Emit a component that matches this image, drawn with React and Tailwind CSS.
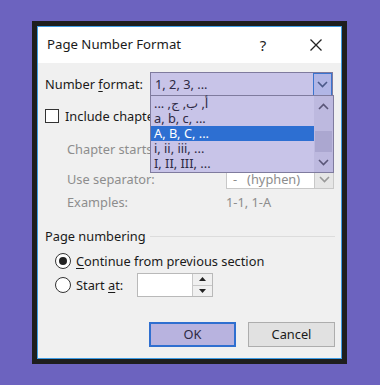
import React from "react";

const font = { fontFamily: '"Noto Sans", "Open Sans", "DejaVu Sans", sans-serif' };

function Chevron({ className = "", up = false, color = "#5a5678" }) {
  return (
    <svg width="11" height="7" viewBox="0 0 11 7" className={className}>
      <polyline
        points={up ? "1,6 5.5,1.5 10,6" : "1,1 5.5,5.5 10,1"}
        fill="none"
        stroke={color}
        strokeWidth="1.6"
      />
    </svg>
  );
}

function Radio({ checked }) {
  return (
    <div className="w-[16px] h-[16px] rounded-full border border-[#333] bg-white flex items-center justify-center shrink-0">
      {checked && <div className="w-[8px] h-[8px] rounded-full bg-[#222]" />}
    </div>
  );
}

export default function App() {
  const items = [
    { t: "أ, ب, ج, ...", rtl: true },
    { t: "a, b, c, ..." },
    { t: "A, B, C, ...", sel: true },
    { t: "i, ii, iii, ..." },
    { t: "I, II, III, ..." },
  ];
  return (
    <div className="w-[380px] h-[385px] bg-[#6c63bf] overflow-hidden pt-[21px] pl-[32px]" style={font}>
      <div className="w-[315px] h-[343px] border-[5px] border-[#1e1e1e] bg-[#1e1e1e]">
        <div className="w-full h-full border border-[#3f9de4] flex flex-col">
          {/* Title bar */}
          <div className="h-[36px] bg-white flex items-center pl-[9px] pr-[19px] shrink-0">
            <div className="text-[13.2px] text-[#1a1a1a] flex-1 leading-none whitespace-nowrap">Page Number Format</div>
            <div className="text-[15px] text-[#222] w-[12px] text-center leading-none mr-[41px]">?</div>
            <svg width="12" height="12" viewBox="0 0 12 12">
              <path d="M0.5 0.5 L11.5 11.5 M11.5 0.5 L0.5 11.5" stroke="#222" strokeWidth="1.3" />
            </svg>
          </div>
          {/* Body */}
          <div className="flex-1 bg-[#f0f0f0] relative pl-[6px] pr-[6px] pt-[9px] text-[12.8px] text-[#1a1a1a] whitespace-nowrap">
            {/* Number format row */}
            <div className="flex items-center h-[24px]">
              <div className="w-[106px] leading-none pl-[1px]">
                Number <span className="underline underline-offset-2">f</span>ormat:
              </div>
              <div className="w-[183px] h-[24px] bg-[#c8c4e8] border border-[#7f7b9e] flex items-center pl-[4px]">
                <span className="flex-1 text-[#2e2a44] leading-none">1, 2, 3, ...</span>
                <div className="w-[19px] h-[23px] bg-[#b1b6e6] border border-[#3a74cf] flex items-center justify-center">
                  <Chevron color="#4b5a8a" />
                </div>
              </div>
            </div>
            {/* Include chapter number */}
            <div className="flex items-center h-[15px] mt-[12px]">
              <div className="w-[14px] h-[14px] border border-[#333] bg-white ml-[1px] shrink-0" />
              <div className="ml-[6px] w-[86px] overflow-hidden leading-[16px]">
                Include chapter <span className="underline underline-offset-2">n</span>umber
              </div>
            </div>
            {/* Chapter starts with style */}
            <div className="flex items-center h-[19px] mt-[16px] pl-[23px] text-[#8d8d8d]">
              <div className="w-[84px] overflow-hidden leading-[16px]">Chapter starts with style:</div>
            </div>
            {/* Use separator */}
            <div className="flex items-center h-[19px] mt-[12px] pl-[23px] text-[#8d8d8d]">
              <div className="w-[159px] leading-none">Use separator:</div>
              <div className="w-[108px] h-[19px] bg-white border border-[#c8c8c8] flex items-center">
                <span className="flex-1 pl-[6px] leading-none">-&nbsp;&nbsp;&nbsp;(hyphen)</span>
                <div className="w-[19px] h-[17px] bg-[#e6e6e6] border-l border-[#c8c8c8] flex items-center justify-center">
                  <Chevron color="#999" />
                </div>
              </div>
            </div>
            {/* Examples */}
            <div className="flex items-center h-[16px] mt-[5px] pl-[23px] text-[#8d8d8d]">
              <div className="w-[159px] leading-none">Examples:</div>
              <div className="leading-none">1-1, 1-A</div>
            </div>
            {/* Page numbering */}
            <div className="flex items-center h-[16px] mt-[18px] pl-[1px]">
              <div className="w-[105px] leading-none">Page numbering</div>
              <div className="flex-1 h-px bg-[#dcdcdc]" />
            </div>
            {/* Continue */}
            <div className="flex items-center h-[16px] mt-[9px] pl-[11px]">
              <Radio checked />
              <div className="ml-[5px] leading-none">
                <span className="underline underline-offset-2">C</span>ontinue from previous section
              </div>
            </div>
            {/* Start at */}
            <div className="flex items-center h-[24px] mt-[4px] pl-[11px]">
              <Radio />
              <div className="ml-[5px] w-[61px] leading-none">
                Start <span className="underline underline-offset-2">a</span>t:
              </div>
              <div className="w-[76px] h-[24px] bg-white border border-[#b9b9b9] flex justify-end">
                <div className="w-[20px] h-full border-l border-[#c8c8c8] bg-[#f0f0f0] flex flex-col">
                  <div className="flex-1 flex items-center justify-center border-b border-[#c8c8c8]">
                    <svg width="7" height="4" viewBox="0 0 7 4"><polygon points="0,4 3.5,0 7,4" fill="#222" /></svg>
                  </div>
                  <div className="flex-1 flex items-center justify-center">
                    <svg width="7" height="4" viewBox="0 0 7 4"><polygon points="0,0 3.5,4 7,0" fill="#222" /></svg>
                  </div>
                </div>
              </div>
            </div>
            {/* Buttons */}
            <div className="flex justify-end gap-[12px] mt-[25px]">
              <div className="w-[87px] h-[25px] bg-[#b8b3df] border-2 border-[#2f6fd0] flex items-center justify-center text-[#2e2a44] leading-none">
                OK
              </div>
              <div className="w-[87px] h-[25px] bg-[#e1e1e1] border border-[#adadad] flex items-center justify-center leading-none">
                Cancel
              </div>
            </div>

            {/* Dropdown list overlay */}
            <div className="absolute left-[112px] top-[32px] w-[184px] h-[78px] bg-[#c8c4e8] border border-[#7f7b9e] flex text-[#2e2a44]">
              <div className="flex-1 flex flex-col">
                {items.map((it, i) => (
                  <div
                    key={i}
                    className={
                      "h-[15px] flex items-center pl-[3px] leading-none " +
                      (it.sel ? "bg-[#2d6fd2] text-white" : "")
                    }
                  >
                    {it.rtl ? <span dir="rtl">{it.t}</span> : it.t}
                  </div>
                ))}
              </div>
              <div className="w-[19px] bg-[#bdb9df] flex flex-col items-center">
                <div className="h-[20px] flex items-center justify-center">
                  <Chevron up />
                </div>
                <div className="w-[17px] h-[21px] bg-[#aba7d0] mt-[15px]" />
                <div className="flex-1 flex items-center justify-center">
                  <Chevron />
                </div>
              </div>
            </div>
          </div>
        </div>
      </div>
    </div>
  );
}
